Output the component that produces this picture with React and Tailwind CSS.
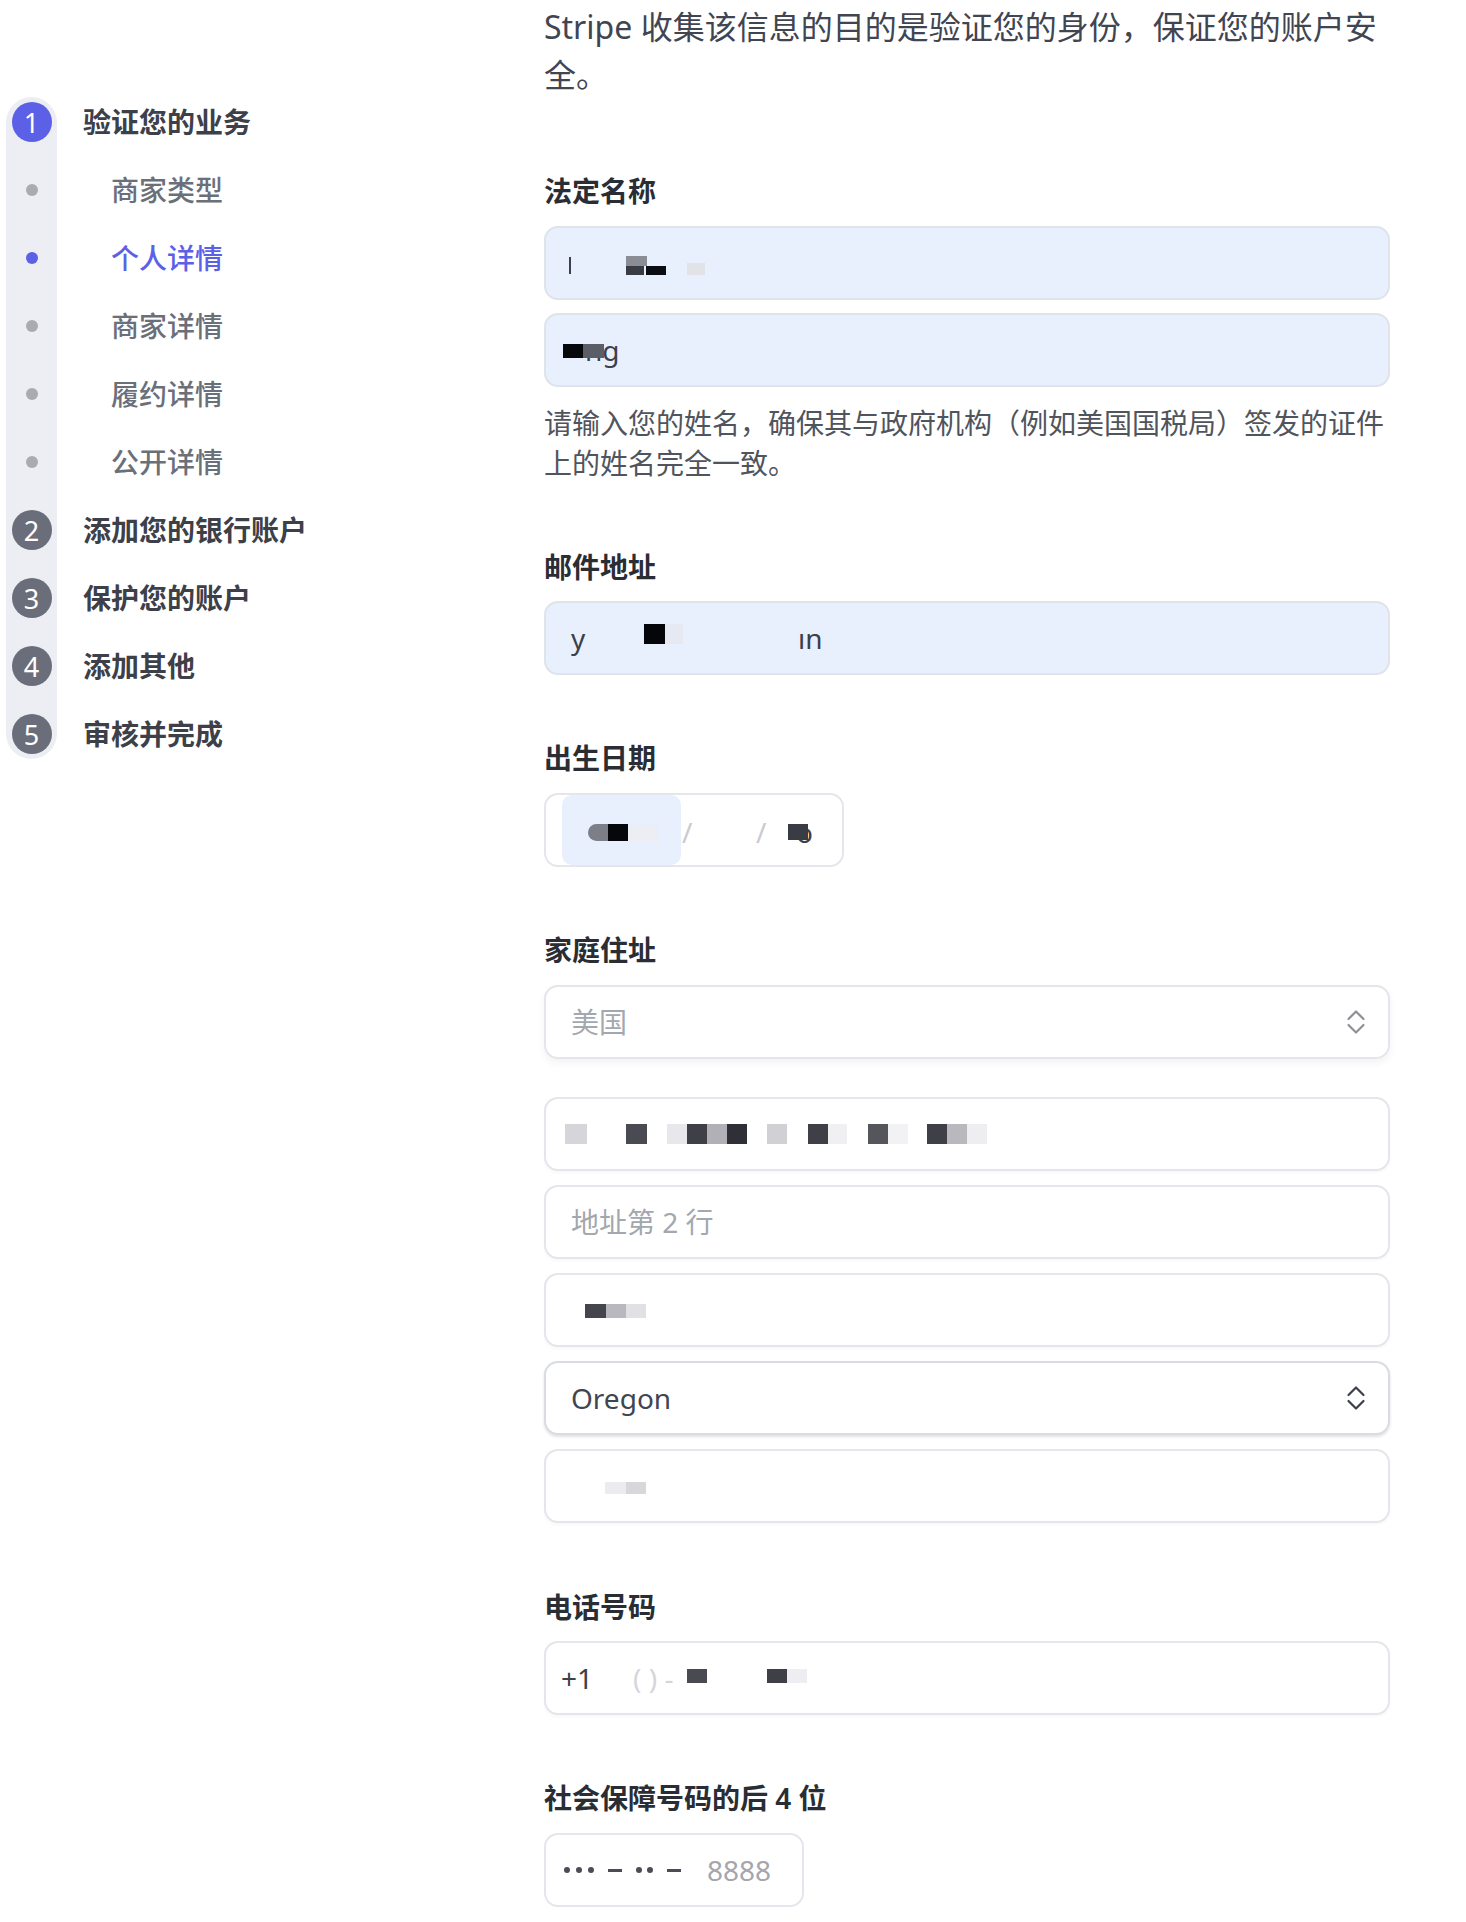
import React from "react";

const steps = [
  { type: "step", num: "1", label: "验证您的业务", active: true },
  { type: "sub", label: "商家类型" },
  { type: "sub", label: "个人详情", active: true },
  { type: "sub", label: "商家详情" },
  { type: "sub", label: "履约详情" },
  { type: "sub", label: "公开详情" },
  { type: "step", num: "2", label: "添加您的银行账户" },
  { type: "step", num: "3", label: "保护您的账户" },
  { type: "step", num: "4", label: "添加其他" },
  { type: "step", num: "5", label: "审核并完成" },
];

// pixel blocks standing in for the redacted values
const firstNameBlocks = [
  "left-[23px] top-[29px] w-[2px] h-[17px] bg-[#3c4049]",
  "left-[80px] top-[28px] w-[21px] h-[10px] bg-[#8a8d96]",
  "left-[80px] top-[38px] w-[18px] h-[9px] bg-[#3a3c45]",
  "left-[100px] top-[38px] w-[20px] h-[9px] bg-[#0c0d12]",
  "left-[141px] top-[35px] w-[18px] h-[12px] bg-[#e2e3e7]",
];

const lastNameBlocks = [
  "left-[17px] top-[29px] w-[20px] h-[14px] bg-[#07080c]",
  "left-[37px] top-[29px] w-[21px] h-[14px] bg-[#5c5e67]",
];

const emailBlocks = [
  "left-[98px] top-[21px] w-[21px] h-[20px] bg-[#05060a]",
  "left-[119px] top-[21px] w-[18px] h-[20px] bg-[#e6e9f2]",
];

const dobBlocks = [
  "left-[42px] top-[29px] w-[24px] h-[17px] rounded-l-full bg-[#7c7f88]",
  "left-[62px] top-[29px] w-[20px] h-[17px] bg-[#06070b]",
  "left-[82px] top-[30px] w-[30px] h-[16px] bg-[#eceef3]",
  "left-[242px] top-[29px] w-[20px] h-[16px] bg-[#3a3c45]",
];

const addressBlocks = [
  "left-[19px] top-[25px] w-[22px] h-[20px] bg-[#d5d5da]",
  "left-[80px] top-[25px] w-[21px] h-[20px] bg-[#4a4a52]",
  "left-[121px] top-[25px] w-[20px] h-[20px] bg-[#e8e8ec]",
  "left-[141px] top-[25px] w-[20px] h-[20px] bg-[#3f3f47]",
  "left-[161px] top-[25px] w-[20px] h-[20px] bg-[#b0b0b6]",
  "left-[181px] top-[25px] w-[20px] h-[20px] bg-[#2f2f37]",
  "left-[221px] top-[25px] w-[20px] h-[20px] bg-[#d0d0d5]",
  "left-[262px] top-[25px] w-[20px] h-[20px] bg-[#3f3f47]",
  "left-[282px] top-[25px] w-[19px] h-[20px] bg-[#f0f0f3]",
  "left-[322px] top-[25px] w-[20px] h-[20px] bg-[#55555c]",
  "left-[342px] top-[25px] w-[20px] h-[20px] bg-[#f2f2f5]",
  "left-[381px] top-[25px] w-[20px] h-[20px] bg-[#3f3f47]",
  "left-[401px] top-[25px] w-[20px] h-[20px] bg-[#b8b8bd]",
  "left-[421px] top-[25px] w-[20px] h-[20px] bg-[#eeeef1]",
];

const cityBlocks = [
  "left-[39px] top-[29px] w-[21px] h-[14px] bg-[#45454d]",
  "left-[60px] top-[29px] w-[20px] h-[14px] bg-[#b8b8be]",
  "left-[80px] top-[29px] w-[20px] h-[14px] bg-[#e0e0e5]",
];

const zipBlocks = [
  "left-[59px] top-[31px] w-[21px] h-[12px] bg-[#ececf0]",
  "left-[80px] top-[31px] w-[20px] h-[12px] bg-[#d8d8dc]",
];

const phoneBlocks = [
  "left-[141px] top-[26px] w-[20px] h-[14px] bg-[#4a4a52]",
  "left-[221px] top-[26px] w-[20px] h-[14px] bg-[#3f3f47]",
  "left-[241px] top-[26px] w-[20px] h-[14px] bg-[#eeeef2]",
];

const Blocks = ({ items }) =>
  items.map((cls, i) => <span key={i} className={`absolute ${cls}`} />);

const Chevrons = ({ dark }) => (
  <svg
    width="20"
    height="28"
    viewBox="0 0 20 28"
    fill="none"
    stroke={dark ? "#3c4049" : "#8e9198"}
    strokeWidth="2.2"
    strokeLinecap="round"
    strokeLinejoin="round"
  >
    <path d="M2.5 11 L10 3.5 L17.5 11" />
    <path d="M2.5 17 L10 24.5 L17.5 17" />
  </svg>
);

const Field = ({ filled, className = "", children }) => (
  <div
    className={`relative h-[74px] rounded-[14px] border-2 flex items-center pl-[25px] pr-[22px] text-[28px] ${
      filled
        ? "bg-[#e8f0fe] border-[#dfe3ea]"
        : "bg-white border-[#e4e6eb] shadow-[0_2px_3px_rgba(0,0,0,0.03)]"
    } ${className}`}
  >
    {children}
  </div>
);

const Label = ({ children, className = "" }) => (
  <h3
    className={`h-[40px] leading-[40px] text-[28px] font-semibold text-[#2a2d33] mb-[15px] ${className}`}
  >
    {children}
  </h3>
);

const Dot = () => <span className="h-[6px] w-[6px] rounded-full bg-[#4a4d55]" />;

const Sidebar = () => (
  <aside className="w-[544px] shrink-0 pt-[97px] pl-[6px] flex items-start">
    {/* Track */}
    <div className="w-[51px] rounded-full bg-[#eceef4] py-[5px] flex flex-col items-center gap-[28px]">
      {steps.map((s, i) =>
        s.type === "step" ? (
          <div
            key={i}
            className={`h-10 w-10 rounded-full flex items-center justify-center text-white text-[27px] leading-none ${
              s.active ? "bg-[#5b60e6]" : "bg-[#6a6e7b]"
            }`}
          >
            {s.num}
          </div>
        ) : (
          <div key={i} className="h-10 w-10 flex items-center justify-center">
            <span
              className={`h-3 w-3 rounded-full ${
                s.active ? "bg-[#5b60e6]" : "bg-[#a8abb2]"
              }`}
            />
          </div>
        )
      )}
    </div>

    {/* Labels */}
    <div className="pt-[5px] pl-[26px] flex flex-col gap-[28px]">
      {steps.map((s, i) => (
        <div
          key={i}
          className={`h-10 flex items-center text-[28px] whitespace-nowrap ${
            s.type === "step"
              ? "font-semibold text-[#3d4048]"
              : s.active
              ? "pl-[28px] font-medium text-[#5b60e6]"
              : "pl-[28px] font-medium text-[#6b6f79]"
          }`}
        >
          {s.label}
        </div>
      ))}
    </div>
  </aside>
);

const App = () => {
  return (
    <div className="min-h-[1922px] bg-white flex font-['Noto_Sans','Noto_Sans_CJK_SC',sans-serif]">
      <Sidebar />

      {/* Main Content */}
      <main className="w-[846px] shrink-0 pt-[3px] text-[#3c4049]">
        <p className="text-[32px] leading-[48px] text-[#414552]">
          Stripe 收集该信息的目的是验证您的身份，保证您的账户安
          <br />
          全。
        </p>

        {/* Legal name */}
        <Label className="mt-[72px]">法定名称</Label>
        <Field filled>
          <Blocks items={firstNameBlocks} />
        </Field>
        <Field filled className="mt-[13px]">
          <span className="text-[#3c4049] pl-[14px]">ng</span>
          <Blocks items={lastNameBlocks} />
        </Field>
        <p className="mt-[16px] text-[28px] leading-[40px] text-[#50545c]">
          请输入您的姓名，确保其与政府机构（例如美国国税局）签发的证件
          <br />
          上的姓名完全一致。
        </p>

        {/* Email */}
        <Label className="mt-[64px] !mb-[14px]">邮件地址</Label>
        <Field filled>
          <span className="text-[#3c4049]">y</span>
          <span className="absolute left-[252px] text-[#3c4049]">ın</span>
          <Blocks items={emailBlocks} />
        </Field>

        {/* Date of birth */}
        <Label className="mt-[63px]">出生日期</Label>
        <div className="relative w-[300px] h-[74px] rounded-[14px] border-2 border-[#e4e6eb] bg-white flex items-center text-[28px]">
          <div className="ml-[16px] w-[119px] h-[70px] rounded-[10px] bg-[#e8f0fe]" />
          <span className="absolute left-[136px] top-[16px] text-[#c9cbd1]">/</span>
          <span className="absolute left-[210px] top-[16px] text-[#c9cbd1]">/</span>
          <span className="absolute left-[250px] top-[16px] text-[#3c4049]">o</span>
          <Blocks items={dobBlocks} />
        </div>

        {/* Home address */}
        <Label className="mt-[63px]">家庭住址</Label>
        <Field className="justify-between shadow-[0_4px_8px_rgba(0,0,0,0.05)]">
          <span className="text-[#a3a7ae]">美国</span>
          <Chevrons />
        </Field>
        <Field className="mt-[38px]">
          <Blocks items={addressBlocks} />
        </Field>
        <Field className="mt-[14px]">
          <span className="text-[#a3a7ae]">地址第 2 行</span>
        </Field>
        <Field className="mt-[14px]">
          <Blocks items={cityBlocks} />
        </Field>
        <Field className="mt-[14px] justify-between !border-[#d9dce1] shadow-[0_2px_3px_rgba(0,0,0,0.12)]">
          <span className="text-[#414552]">Oregon</span>
          <Chevrons dark />
        </Field>
        <Field className="mt-[14px]">
          <Blocks items={zipBlocks} />
        </Field>

        {/* Phone */}
        <Label className="mt-[64px] !mb-[14px]">电话号码</Label>
        <Field className="!pl-[15px]">
          <span className="text-[#3c4049]">+1</span>
          <span className="ml-[40px] text-[#d4d6db]">(   )   -</span>
          <Blocks items={phoneBlocks} />
        </Field>

        {/* SSN */}
        <Label className="mt-[63px]">社会保障号码的后 4 位</Label>
        <div className="w-[260px] h-[74px] rounded-[14px] border-2 border-[#e4e6eb] bg-white flex items-center pl-[18px] text-[28px]">
          <div className="flex items-center gap-[6px]">
            <Dot />
            <Dot />
            <Dot />
          </div>
          <span className="ml-[14px] h-[3px] w-[14px] bg-[#4a4d55]" />
          <div className="ml-[14px] flex items-center gap-[5px]">
            <Dot />
            <Dot />
          </div>
          <span className="ml-[14px] h-[3px] w-[14px] bg-[#4a4d55]" />
          <span className="ml-[26px] text-[#a3a6ad]">8888</span>
        </div>
      </main>
    </div>
  );
};

export default App;
